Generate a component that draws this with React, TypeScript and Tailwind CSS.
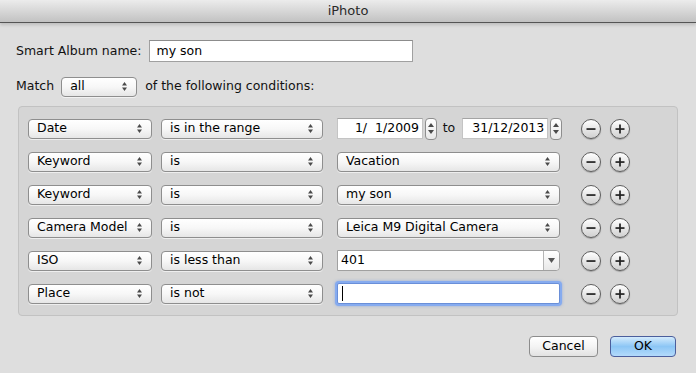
import React from "react";

const font = { fontFamily: '"DejaVu Sans", "Noto Sans", sans-serif' };

function Arrows() {
  return (
    <svg width="7" height="11" viewBox="0 0 7 11" className="shrink-0">
      <path d="M3.5 1 L6 4.5 L1 4.5 Z" fill="#4a4a4a" />
      <path d="M3.5 10 L6 6.5 L1 6.5 Z" fill="#4a4a4a" />
    </svg>
  );
}

function Popup({ label, w }: { label: string; w: string }) {
  return (
    <div
      className={`${w} h-[20px] shrink-0 flex items-center justify-between pl-[8px] pr-[8px] rounded-[4px] border border-[#8e8e8e] bg-gradient-to-b from-[#ffffff] via-[#f7f7f7] to-[#e6e6e6] shadow-[0_1px_0_rgba(255,255,255,0.6)] text-[12.5px] text-black`}
    >
      <span className="leading-none">{label}</span>
      <Arrows />
    </div>
  );
}

function Stepper() {
  return (
    <div className="w-[12px] h-[22px] shrink-0 rounded-[4px] border border-[#8e8e8e] bg-gradient-to-b from-white to-[#e8e8e8] flex flex-col items-center justify-center gap-[3px]">
      <svg width="6" height="4" viewBox="0 0 6 4"><path d="M3 0 L6 4 L0 4 Z" fill="#4a4a4a" /></svg>
      <svg width="6" height="4" viewBox="0 0 6 4"><path d="M3 4 L6 0 L0 0 Z" fill="#4a4a4a" /></svg>
    </div>
  );
}

function CircleBtn({ plus }: { plus?: boolean }) {
  return (
    <div className="w-[20px] h-[20px] rounded-full border border-[#5e5e5e] bg-gradient-to-b from-white to-[#d0d0d0] shadow-[0_1px_1px_rgba(0,0,0,0.25)] flex items-center justify-center shrink-0">
      <svg width="12" height="12" viewBox="0 0 12 12">
        <rect x="1.5" y="5.2" width="9" height="1.7" fill="#222" />
        {plus && <rect x="5.15" y="1.5" width="1.7" height="9" fill="#222" />}
      </svg>
    </div>
  );
}

function Field({ value, w, right }: { value: string; w: string; right?: boolean }) {
  return (
    <div
      className={`${w} h-[21px] shrink-0 bg-white border border-[#c4c4c4] border-t-[#a4a4a4] flex items-center text-[12.5px] text-black px-[3px] whitespace-pre ${right ? "justify-end" : ""}`}
    >
      {value}
    </div>
  );
}

function Row({ a, b, children }: { a: string; b: string; children: React.ReactNode }) {
  return (
    <div className="flex items-center h-[21px]">
      <Popup label={a} w="w-[124px]" />
      <div className="w-[9px]" />
      <Popup label={b} w="w-[162px]" />
      <div className="w-[14px] shrink-0" />
      <div className="w-[225px] shrink-0 flex items-center">{children}</div>
      <div className="w-[19px] shrink-0" />
      <CircleBtn />
      <div className="w-[9px] shrink-0" />
      <CircleBtn plus />
    </div>
  );
}

export default function App() {
  return (
    <div
      className="w-[696px] h-[373px] bg-[#dedede] flex flex-col text-[12.5px] text-[#111] overflow-hidden"
      style={font}
    >
      <div className="h-[23px] shrink-0 bg-gradient-to-b from-[#ececec] via-[#d7d7d7] to-[#c2c2c2] border-b border-[#555] flex items-center justify-center text-[13px] text-[#2a2a2a] shadow-[0_2px_3px_rgba(0,0,0,0.15)]">
        iPhoto
      </div>

      <div className="flex items-center mt-[17px] pl-[16px] h-[22px]">
        <span>Smart Album name:</span>
        <div className="ml-[8px] w-[264px] h-[22px] bg-white border border-[#a0a0a0] border-t-[#8c8c8c] flex items-center px-[6px] text-[12.5px] text-black">
          my son
        </div>
      </div>

      <div className="flex items-center mt-[14px] pl-[16px] h-[21px]">
        <span>Match</span>
        <div className="ml-[7px]">
          <Popup label="all" w="w-[76px]" />
        </div>
        <span className="ml-[8px]">of the following conditions:</span>
      </div>

      <div className="ml-[18px] mt-[9px] w-[660px] h-[210px] shrink-0 rounded-[4px] border border-[#c2c2c2] bg-[#d5d5d5] flex flex-col pt-[11px] pl-[9px] gap-[12px]">
        <Row a="Date" b="is in the range">
          <Field value="1/  1/2009" w="w-[86px]" right />
          <div className="w-[3px]" />
          <Stepper />
          <span className="ml-[6px] mr-[7px]">to</span>
          <Field value="31/12/2013" w="w-[86px]" right />
          <div className="w-[3px]" />
          <Stepper />
        </Row>
        <Row a="Keyword" b="is">
          <Popup label="Vacation" w="w-[223px]" />
        </Row>
        <Row a="Keyword" b="is">
          <Popup label="my son" w="w-[223px]" />
        </Row>
        <Row a="Camera Model" b="is">
          <Popup label="Leica M9 Digital Camera" w="w-[223px]" />
        </Row>
        <Row a="ISO" b="is less than">
          <div className="w-[223px] h-[21px] flex bg-white border border-[#a0a0a0] rounded-r-[4px]">
            <div className="flex-1 flex items-center pl-[3px] text-black">401</div>
            <div className="w-[16px] border-l border-[#b5b5b5] bg-gradient-to-b from-white to-[#e8e8e8] rounded-r-[4px] flex items-center justify-center">
              <svg width="7" height="5" viewBox="0 0 7 5"><path d="M0 0 L7 0 L3.5 5 Z" fill="#555" /></svg>
            </div>
          </div>
        </Row>
        <Row a="Place" b="is not">
          <div className="w-[223px] h-[21px] bg-white border border-[#6a8fd8] rounded-[2px] shadow-[0_0_0_2px_#86abef,0_0_3px_2px_rgba(80,130,230,0.5)] flex items-center pl-[4px]">
            <div className="w-[1px] h-[15px] bg-black" />
          </div>
        </Row>
      </div>

      <div className="flex justify-end mt-[20px] pr-[20px] gap-[12px]">
        <div className="w-[69px] h-[21px] rounded-[4px] border border-[#8c8c8c] bg-gradient-to-b from-white via-[#f4f4f4] to-[#e2e2e2] flex items-center justify-center text-black">
          Cancel
        </div>
        <div className="w-[66px] h-[21px] rounded-[4px] border border-[#4b5e9c] bg-gradient-to-b from-[#d4ebfc] via-[#8cc6f5] to-[#b3dafb] flex items-center justify-center text-black">
          OK
        </div>
      </div>
    </div>
  );
}
